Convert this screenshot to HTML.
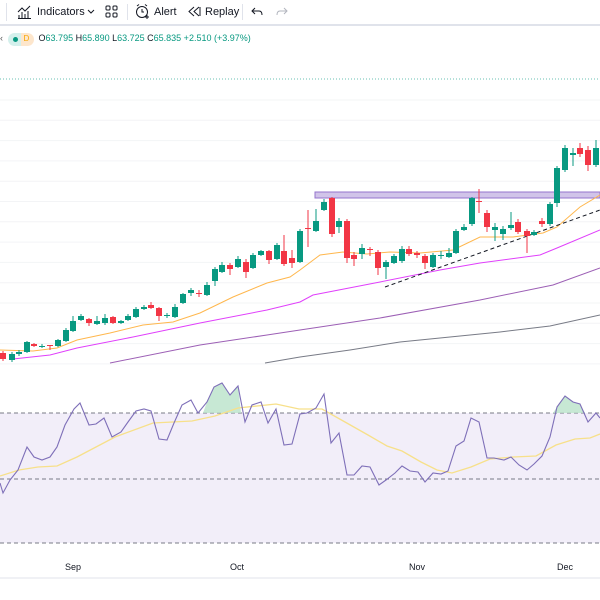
<!DOCTYPE html><html><head><style>
body{margin:0;width:600px;height:600px;background:#fff;overflow:hidden;font-family:"Liberation Sans",sans-serif;position:relative}
.tb{position:absolute;left:0;top:0;width:600px;height:24px;border-bottom:2px solid #e0e3eb;font-size:11px;color:#131722}
.tb span{position:absolute;top:6px}
.lg{position:absolute;top:32px;left:0;font-size:9px;color:#089981;white-space:nowrap}
</style></head><body>
<div class="tb">
<div style="position:absolute;left:6px;top:3px;width:1px;height:18px;background:#e0e3eb"></div>
<svg style="position:absolute;left:17px;top:4px" width="15" height="15" viewBox="0 0 15 15" fill="none" stroke="#131722" stroke-width="1"><path d="M1 8 L5 4 L8 7 L13 2"/><path d="M2 14V11M5 14V8M8 14V10M11 14V7M1 14.5H14"/></svg>
<span style="left:37px">Indicators</span>
<svg style="position:absolute;left:87px;top:9px" width="8" height="6"><path d="M1 1L4 4L7 1" fill="none" stroke="#131722"/></svg>
<svg style="position:absolute;left:105px;top:5px" width="13" height="13" fill="none" stroke="#131722"><rect x="1" y="1" width="4" height="4" rx="1"/><rect x="8" y="1" width="4" height="4" rx="1"/><rect x="1" y="8" width="4" height="4" rx="1"/><rect x="8" y="8" width="4" height="4" rx="1"/></svg>
<div style="position:absolute;left:127px;top:4px;width:1px;height:16px;background:#e0e3eb"></div>
<svg style="position:absolute;left:135px;top:3px" width="16" height="17" fill="none" stroke="#131722"><circle cx="7" cy="9" r="5.5"/><path d="M7 6V9H9M2 3L4 1.5M12 3L10 1.5M12 12V16M10 14H14"/></svg>
<span style="left:154px">Alert</span>
<svg style="position:absolute;left:188px;top:6px" width="13" height="11" fill="none" stroke="#131722"><path d="M6 1L1 5.5L6 10M11 1L6 5.5L11 10M12 1V10"/></svg>
<span style="left:205px">Replay</span>
<div style="position:absolute;left:242px;top:4px;width:1px;height:16px;background:#e0e3eb"></div>
<svg style="position:absolute;left:251px;top:7px" width="12" height="9" fill="none" stroke="#131722"><path d="M4 1L1 4L4 7M1 4H8Q11 4 11 8"/></svg>
<svg style="position:absolute;left:276px;top:7px" width="12" height="9" fill="none" stroke="#b2b5be"><path d="M8 1L11 4L8 7M11 4H4Q1 4 1 8"/></svg>
</div>
<div class="lg"><span style="color:#555">&lsaquo;</span>
<span style="display:inline-block;position:relative;top:1px;width:26px;height:13px;border-radius:7px;background:linear-gradient(90deg,#d4f0ec 50%,#fde6cc 50%);vertical-align:middle;margin-left:2px"><span style="position:absolute;left:5px;top:4px;width:5px;height:5px;border-radius:3px;background:#089981"></span><span style="position:absolute;left:16px;top:1px;color:#f7a600;font-size:8px">D</span></span>
&nbsp;<span style="color:#131722">O</span>63.795 <span style="color:#131722">H</span>65.890 <span style="color:#131722">L</span>63.725 <span style="color:#131722">C</span>65.835 +2.510 (+3.97%)</div>
<svg id="c" style="position:absolute;left:0;top:0" width="600" height="600"></svg>
<script>
var s='';
s+='<line x1="0" y1="79" x2="600" y2="79" stroke="#089981" stroke-dasharray="1 2" stroke-width="1" opacity=".6"/>';
for(var y=100;y<370;y+=20.3)s+='<line x1="0" y1="'+y+'" x2="600" y2="'+y+'" stroke="#f3f4f6"/>';
s+='<rect x="0" y="413" width="600" height="130" fill="#7e57c2" opacity=".1"/>';
[413,479,543].forEach(function(y){s+='<line x1="0" y1="'+y+'" x2="600" y2="'+y+'" stroke="#787b86" stroke-dasharray="4 3"/>'});
s+='<rect x="315" y="192" width="285" height="6" fill="#d1c4e9" stroke="#9575cd" stroke-width="1"/>';
function pl(p,c,w,d){s+='<polyline fill="none" stroke="'+c+'" stroke-width="'+(w||1)+'" '+(d||'')+' points="'+p+'"/>'}
pl('265,363 300,357 350,350 400,342 450,337 500,332 550,326 600,315','#787b86');
pl('110,363 200,345 267,335 300,330 380,318 480,300 553,285 600,268','#9c5fb5');
pl('13,359 50,355 77,348 133,337 200,323 267,310 300,302 313,295 380,282 440,270 480,263 540,255 557,248 600,230','#e040fb');
pl('0,350 33,351 57,348 77,340 110,333 143,325 173,322 200,313 233,297 267,283 290,277 300,270 320,255 343,252 367,254 390,252 420,253 453,250 480,237 513,237 543,233 557,227 580,207 600,195','#ffb74d');
pl('385,287 600,210','#131722',1,'stroke-dasharray="4 3"');
var C=[[3,353,359,351,361,0],[12,354,360,352,362,1],[19,352,354,350,356,1],[27,342,352,341,353,1],[34,344,346,343,347,0],[42,346,347,344,348,1],[50,345,346,345,350,0],[58,340,346,339,347,1],[66,330,341,328,342,1],[73,321,331,316,332,1],[81,316,320,314,321,1],[89,319,323,318,326,0],[97,321,324,316,325,1],[105,318,323,314,325,1],[113,317,323,316,324,0],[121,321,323,320,324,1],[128,316,320,314,321,1],[136,309,317,307,318,1],[144,307,309,305,310,1],[151,305,308,302,309,0],[159,308,316,307,321,0],[167,315,316,313,318,1],[175,307,317,304,318,1],[183,294,303,293,304,1],[191,290,293,288,296,1],[199,293,294,290,297,0],[207,285,295,282,296,1],[215,269,281,267,286,1],[222,265,272,262,273,1],[230,265,269,263,275,0],[238,259,267,256,268,1],[246,262,272,259,278,0],[253,255,268,253,269,1],[261,251,255,250,256,1],[269,251,260,250,264,0],[277,245,259,243,260,1],[284,251,264,235,266,0],[292,258,263,250,268,0],[300,231,262,229,263,1],[308,228,229,210,247,0],[316,221,231,209,232,1],[324,202,210,199,211,1],[332,198,234,197,237,0],[339,221,227,218,233,1],[347,221,258,219,263,0],[354,255,259,252,266,0],[362,248,254,244,259,1],[370,249,250,247,256,0],[378,252,268,250,275,0],[386,262,267,260,279,1],[394,256,263,254,264,1],[402,249,261,246,263,1],[409,249,254,246,256,0],[417,253,255,251,258,0],[425,256,263,254,269,0],[433,255,267,253,268,1],[441,255,256,251,259,1],[449,253,257,248,258,1],[456,231,253,229,254,1],[464,227,230,224,231,1],[472,198,224,197,226,1],[479,201,202,189,213,0],[487,213,227,210,232,0],[495,227,230,223,241,1],[503,229,234,226,240,1],[511,225,228,212,230,1],[518,222,232,219,234,0],[527,231,236,229,253,0],[534,232,235,230,236,1],[542,221,224,218,227,0],[550,204,224,202,226,1],[557,168,203,166,207,1],[565,148,170,145,172,1],[573,153,155,148,166,1],[580,148,154,143,157,0],[588,150,165,146,171,0],[596,148,165,140,167,1]];
C.forEach(function(c){var col=c[5]?'#089981':'#f23645';s+='<line x1="'+c[0]+'" y1="'+c[3]+'" x2="'+c[0]+'" y2="'+c[4]+'" stroke="'+col+'"/><rect x="'+(c[0]-3)+'" y="'+c[1]+'" width="6" height="'+Math.max(1,c[2]-c[1])+'" fill="'+col+'"/>'});
var R='0,483 3,493 10,480 18,470 27,447 34,457 42,460 50,457 57,447 65,425 74,409 80,403 89,425 96,424 104,418 112,437 121,432 128,422 136,411 144,409 151,411 159,439 167,440 174,423 182,405 191,400 198,413 207,402 214,387 222,383 230,395 238,386 245,422 252,405 261,402 268,423 276,409 284,445 292,444 300,414 307,413 316,408 324,394 331,443 339,433 347,475 354,475 362,466 370,467 379,485 386,480 395,473 402,466 410,471 418,472 425,482 433,473 441,474 448,471 456,446 464,441 471,418 479,422 487,458 494,458 504,460 511,457 519,465 527,470 534,464 542,456 550,437 557,407 565,396 573,402 580,404 588,422 596,413 600,418';
s+='<path d="M203,413 L207,402 214,387 222,383 230,395 238,386 241,413Z M553,413 L557,407 565,396 573,402 580,404 585,413Z" fill="#b9e2c9" opacity=".8"/>';
pl('0,476 19,470 38,467 57,466 77,457 115,437 153,423 192,421 215,416 238,408 276,404 299,409 322,409 345,422 368,435 387,446 402,451 421,462 437,470 452,473 471,467 490,459 513,457 536,456 556,445 575,439 590,438 600,434','#f7e08a',1.3);
pl(R,'#7e6fb8',1.1);
s+='<line x1="0" y1="578" x2="600" y2="578" stroke="#e0e3eb"/>';
[['Sep',73],['Oct',237],['Nov',417],['Dec',565]].forEach(function(t){s+='<text x="'+t[1]+'" y="570" font-size="9" fill="#131722" text-anchor="middle" font-family="Liberation Sans">'+t[0]+'</text>'});
document.getElementById('c').innerHTML=s;
</script>
</body></html>
